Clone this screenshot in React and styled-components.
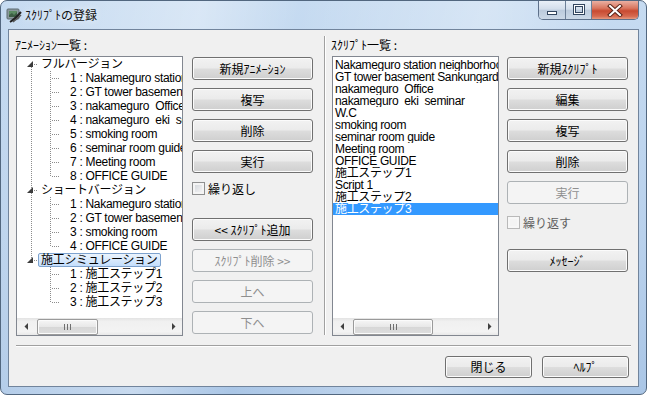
import React from "react";
import styled, { createGlobalStyle } from "styled-components";

const GlobalStyle = createGlobalStyle`
	html, body {
		margin: 0;
		padding: 0;
		background: #ffffff;
	}
	body {
		font-family: "Liberation Sans", "Noto Sans CJK JP", sans-serif;
		font-size: 12px;
		color: #000;
	}
	* {
		box-sizing: border-box;
	}
`;

const Window = styled.div`
	width: 647px;
	height: 395px;
	border: 1px solid #52677f;
	border-radius: 7px;
	padding: 0 7px 7px 7px;
	display: flex;
	flex-direction: column;
	overflow: hidden;
	background:
		linear-gradient(100deg, rgba(255, 255, 255, 0) 0%, rgba(255, 255, 255, 0.35) 28%, rgba(255, 255, 255, 0) 42%, rgba(255, 255, 255, 0.3) 68%, rgba(255, 255, 255, 0) 86%),
		linear-gradient(180deg, #c6dbf1 0%, #b9d1ec 60%, #aac6e6 100%);
`;

const TitleBar = styled.div`
	height: 28px;
	margin: 0 -7px;
	padding: 0 7px 0 5px;
	display: flex;
	align-items: flex-start;
	flex-shrink: 0;
`;

const TitleLeft = styled.div`
	height: 28px;
	display: flex;
	align-items: center;
	gap: 3px;
`;

const TitleText = styled.span`
	font-family: "Noto Sans CJK JP", sans-serif;
	font-size: 12px;
	line-height: 14px;
	color: #111;
	text-shadow: 0 0 6px rgba(255, 255, 255, 0.9);
`;

const Controls = styled.div`
	margin-left: auto;
	display: flex;
	height: 19px;
	border: 1px solid #5d708a;
	border-top: none;
	border-radius: 0 0 5px 5px;
	overflow: hidden;
`;

const ControlButton = styled.div`
	width: ${p => p.$w}px;
	height: 100%;
	display: flex;
	align-items: center;
	justify-content: center;
	border-left: ${p => (p.$first ? "none" : "1px solid #6d8098")};
	background: ${p =>
		p.$close
			? "linear-gradient(180deg, #eab0a2 0%, #d9765f 40%, #c84a31 55%, #d66a50 85%, #e69a80 100%)"
			: "linear-gradient(180deg, #e9f0f8 0%, #d3deeb 45%, #bccbdd 52%, #cbd8e7 100%)"};
`;

const Client = styled.div`
	flex: 1;
	border: 1px solid #71849c;
	background: #f0f0f0;
	display: flex;
	flex-direction: column;
`;

const Main = styled.div`
	display: flex;
	align-items: flex-start;
	padding: 8px 0 0 7px;
`;

const Panel = styled.div`
	width: 167px;
	margin-left: ${p => p.$ml || 0}px;
	display: flex;
	flex-direction: column;
`;

const PanelLabel = styled.div`
	height: 14px;
	margin: 0 0 4px -1px;
	font-family: "Noto Sans CJK JP", sans-serif;
	font-size: 12px;
	line-height: 14px;
`;

const Box = styled.div`
	height: 280px;
	border: 1px solid #828790;
	background: #ffffff;
	display: flex;
	flex-direction: column;
	overflow: hidden;
`;

const BoxContent = styled.div`
	flex: 1;
	overflow: hidden;
	padding-top: ${p => p.$pt || 0}px;
`;

const TreeRow = styled.div`
	height: 14px;
	display: flex;
	align-items: center;
	white-space: pre;
	overflow: hidden;
	& > svg {
		flex-shrink: 0;
	}
`;

const NodeLabel = styled.span`
	flex-shrink: 0;
	height: 14px;
	padding: 0 2px;
	line-height: 12px;
	border: 1px solid ${p => (p.$selected ? "#7da2ce" : "transparent")};
	border-radius: 2px;
	background: ${p => (p.$selected ? "linear-gradient(180deg, #ebf4fd 0%, #c4defc 100%)" : "transparent")};
	font-size: 12px;
	letter-spacing: -0.3px;
`;

const ListRow = styled.div`
	height: 12px;
	line-height: 12px;
	padding-left: 2px;
	white-space: pre;
	overflow: hidden;
	font-size: 12px;
	letter-spacing: -0.35px;
	color: ${p => (p.$selected ? "#ffffff" : "#000")};
	background: ${p => (p.$selected ? "#3399ff" : "transparent")};
`;

const ScrollBar = styled.div`
	height: 17px;
	display: flex;
	flex-shrink: 0;
	background: linear-gradient(180deg, #e3e3e3 0%, #f0f0f0 20%, #f3f3f3 80%, #e8e8e8 100%);
`;

const ArrowBox = styled.div`
	width: 17px;
	height: 17px;
	display: flex;
	align-items: center;
	justify-content: center;
`;

const Track = styled.div`
	flex: 1;
	display: flex;
	align-items: center;
`;

const Thumb = styled.div`
	height: 16px;
	margin-left: ${p => p.$left}px;
	width: ${p => p.$width}px;
	border: 1px solid #9a9a9a;
	border-radius: 2px;
	background: linear-gradient(180deg, #f6f6f6 0%, #e8e8e8 48%, #d7d7d7 52%, #dedede 100%);
	box-shadow: inset 0 0 0 1px #fbfbfb;
	display: flex;
	align-items: center;
	justify-content: center;
`;

const ButtonColumn = styled.div`
	width: 121px;
	margin-left: ${p => p.$ml}px;
	padding-top: 19px;
	display: flex;
	flex-direction: column;
`;

const Button = styled.button`
	width: ${p => (p.$w ? `${p.$w}px` : "100%")};
	height: ${p => p.$h || 23}px;
	margin-top: ${p => (p.$mt === undefined ? 8 : p.$mt)}px;
	padding: 0;
	border: 1px solid #707070;
	border-radius: 3px;
	background: linear-gradient(180deg, #f2f2f2 0%, #ebebeb 48%, #dddddd 52%, #cfcfcf 100%);
	box-shadow: inset 0 0 0 1px #fbfbfb;
	font-family: "Noto Sans CJK JP", sans-serif;
	font-size: 12px;
	line-height: 14px;
	color: #000;
	&:disabled {
		border-color: #adb2b5;
		background: #f4f4f4;
		box-shadow: none;
		color: #8f8f8f;
	}
`;

const CheckRow = styled.label`
	display: flex;
	align-items: center;
	gap: 3px;
	height: 13px;
	margin-top: ${p => p.$mt}px;
	font-family: "Noto Sans CJK JP", sans-serif;
	font-size: 12px;
	line-height: 13px;
	color: ${p => (p.$disabled ? "#5f5f5f" : "#000")};
`;

const CheckBox = styled.span`
	width: 13px;
	height: 13px;
	border: 1px solid ${p => (p.$disabled ? "#b9b9b9" : "#8e8f8f")};
	background: ${p =>
		p.$disabled
			? "#f4f4f4"
			: "linear-gradient(135deg, #cfd3d8 0%, #e9eaec 60%, #f7f7f7 100%)"};
	box-shadow: inset 0 0 0 2px ${p => (p.$disabled ? "#f7f7f7" : "#f4f4f4")};
`;

const VSeparator = styled.div`
	width: 2px;
	height: 299px;
	margin: -2px 0 0 11px;
	border-left: 1px solid #a0a0a0;
	border-right: 1px solid #ffffff;
`;

const HSeparator = styled.div`
	height: 2px;
	margin: 9px 7px 0 7px;
	border-top: 1px solid #a0a0a0;
	border-bottom: 1px solid #ffffff;
`;

const Footer = styled.div`
	display: flex;
	justify-content: flex-end;
	gap: 10px;
	padding: 9px 9px 0 0;
`;

const tree = [
	{
		name: "フルバージョン",
		items: [
			"Nakameguro station neighborhood",
			"GT tower basement Sankungarden",
			"nakameguro  Office",
			"nakameguro  eki  seminar",
			"smoking room",
			"seminar room guide",
			"Meeting room",
			"OFFICE GUIDE",
		],
	},
	{
		name: "ショートバージョン",
		items: [
			"Nakameguro station neighborhood",
			"GT tower basement Sankungarden",
			"smoking room",
			"OFFICE GUIDE",
		],
	},
	{
		name: "施工シミュレーション",
		selected: true,
		items: ["施工ステップ1", "施工ステップ2", "施工ステップ3"],
	},
];

const scripts = [
	"Nakameguro station neighborhood",
	"GT tower basement Sankungarden",
	"nakameguro  Office",
	"nakameguro  eki  seminar",
	"W.C",
	"smoking room",
	"seminar room guide",
	"Meeting room",
	"OFFICE GUIDE",
	"施工ステップ1",
	"Script 1",
	"施工ステップ2",
	"施工ステップ3",
];

const DOT = { stroke: "#8c8c8c", strokeWidth: 1, strokeDasharray: "1 1" };

const TitleIcon = () => (
	<svg width="16" height="16" viewBox="0 0 16 16">
		<rect x="1" y="2" width="12" height="10" rx="1" fill="#8b989c" stroke="#5d6a70" />
		<rect x="3" y="4" width="8" height="6" fill="#5b8a62" />
		<path d="M3 8 L6 6 L8 8 L11 5 L11 10 L3 10 Z" fill="#3d5e44" />
		<path d="M4 15 Q9 12 15 5" stroke="#222" strokeWidth="2" fill="none" />
		<path d="M7 15 Q11 12 15 8" stroke="#555" strokeWidth="1.5" fill="none" />
	</svg>
);

const MinIcon = () => (
	<svg width="14" height="12" viewBox="0 0 14 12">
		<rect x="2.5" y="7.5" width="9" height="3" fill="#ffffff" stroke="#33465f" />
	</svg>
);

const MaxIcon = () => (
	<svg width="14" height="12" viewBox="0 0 14 12">
		<rect x="2.5" y="1.5" width="9" height="8" fill="none" stroke="#33465f" strokeWidth="3" />
		<rect x="2.5" y="1.5" width="9" height="8" fill="none" stroke="#ffffff" strokeWidth="1" />
	</svg>
);

const CloseIcon = () => (
	<svg width="16" height="13" viewBox="0 0 16 13">
		<path d="M3 2 L13 11 M13 2 L3 11" stroke="#5a2418" strokeWidth="4" strokeLinecap="square" />
		<path d="M3 2 L13 11 M13 2 L3 11" stroke="#ffffff" strokeWidth="2" strokeLinecap="square" />
	</svg>
);

const RootGutter = ({ first, last }) => (
	<svg width="21" height="14" viewBox="0 0 21 14">
		{!first && <line x1="14.5" y1="0" x2="14.5" y2="5" {...DOT} />}
		{!last && <line x1="14.5" y1="10" x2="14.5" y2="14" {...DOT} />}
		<polygon points="16,4 16,10 10,10" fill="#3c3c3c" />
		<line x1="17" y1="7.5" x2="21" y2="7.5" {...DOT} />
	</svg>
);

const ChildGutter = ({ rootLast, last }) => (
	<svg width="50" height="14" viewBox="0 0 50 14">
		{!rootLast && <line x1="14.5" y1="0" x2="14.5" y2="14" {...DOT} />}
		<line x1="33.5" y1="0" x2="33.5" y2={last ? 8 : 14} {...DOT} />
		<line x1="35" y1="7.5" x2="42" y2="7.5" {...DOT} />
	</svg>
);

const HScroll = ({ thumbLeft, thumbWidth }) => (
	<ScrollBar>
		<ArrowBox>
			<svg width="4" height="7" viewBox="0 0 4 7">
				<polygon points="4,0 4,7 0.5,3.5" fill="#404040" />
			</svg>
		</ArrowBox>
		<Track>
			<Thumb $left={thumbLeft} $width={thumbWidth}>
				<svg width="7" height="6" viewBox="0 0 7 6">
					<path d="M0.5 0 V6 M3.5 0 V6 M6.5 0 V6" stroke="#6f6f6f" strokeWidth="1" />
				</svg>
			</Thumb>
		</Track>
		<ArrowBox>
			<svg width="4" height="7" viewBox="0 0 4 7">
				<polygon points="0,0 0,7 3.5,3.5" fill="#404040" />
			</svg>
		</ArrowBox>
	</ScrollBar>
);

const AnimationTree = () => (
	<Box>
		<BoxContent>
			{tree.map((root, ri) => (
				<React.Fragment key={root.name}>
					<TreeRow>
						<RootGutter first={ri === 0} last={ri === tree.length - 1} />
						<NodeLabel $selected={root.selected}>{root.name}</NodeLabel>
					</TreeRow>
					{root.items.map((item, i) => (
						<TreeRow key={i}>
							<ChildGutter rootLast={ri === tree.length - 1} last={i === root.items.length - 1} />
							<NodeLabel>{`${i + 1} : ${item}`}</NodeLabel>
						</TreeRow>
					))}
				</React.Fragment>
			))}
		</BoxContent>
		<HScroll thumbLeft={3} thumbWidth={61} />
	</Box>
);

const ScriptList = () => (
	<Box>
		<BoxContent $pt={2}>
			{scripts.map((s, i) => (
				<ListRow key={i} $selected={i === scripts.length - 1}>
					{s}
				</ListRow>
			))}
		</BoxContent>
		<HScroll thumbLeft={3} thumbWidth={80} />
	</Box>
);

const App = () => (
	<>
		<GlobalStyle />
		<Window>
			<TitleBar>
				<TitleLeft>
					<TitleIcon />
					<TitleText>ｽｸﾘﾌﾟﾄの登録</TitleText>
				</TitleLeft>
				<Controls>
					<ControlButton $w={26} $first>
						<MinIcon />
					</ControlButton>
					<ControlButton $w={26}>
						<MaxIcon />
					</ControlButton>
					<ControlButton $w={47} $close>
						<CloseIcon />
					</ControlButton>
				</Controls>
			</TitleBar>
			<Client>
				<Main>
					<Panel>
						<PanelLabel>ｱﾆﾒｰｼｮﾝ一覧 :</PanelLabel>
						<AnimationTree />
					</Panel>
					<ButtonColumn $ml={9}>
						<Button $mt={0}>新規ｱﾆﾒｰｼｮﾝ</Button>
						<Button>複写</Button>
						<Button>削除</Button>
						<Button>実行</Button>
						<CheckRow $mt={9}>
							<CheckBox />
							繰り返し
						</CheckRow>
						<Button $mt={23}>&lt;&lt; ｽｸﾘﾌﾟﾄ追加</Button>
						<Button disabled>ｽｸﾘﾌﾟﾄ削除 &gt;&gt;</Button>
						<Button disabled>上へ</Button>
						<Button disabled>下へ</Button>
					</ButtonColumn>
					<VSeparator />
					<Panel $ml={6}>
						<PanelLabel>ｽｸﾘﾌﾟﾄ一覧 :</PanelLabel>
						<ScriptList />
					</Panel>
					<ButtonColumn $ml={8}>
						<Button $mt={0}>新規ｽｸﾘﾌﾟﾄ</Button>
						<Button>編集</Button>
						<Button>複写</Button>
						<Button>削除</Button>
						<Button disabled>実行</Button>
						<CheckRow $mt={12} $disabled>
							<CheckBox $disabled />
							繰り返す
						</CheckRow>
						<Button $mt={20}>ﾒｯｾｰｼﾞ</Button>
					</ButtonColumn>
				</Main>
				<HSeparator />
				<Footer>
					<Button $mt={0} $w={87} $h={22}>
						閉じる
					</Button>
					<Button $mt={0} $w={87} $h={22}>
						ﾍﾙﾌﾟ
					</Button>
				</Footer>
			</Client>
		</Window>
	</>
);

export default App;
